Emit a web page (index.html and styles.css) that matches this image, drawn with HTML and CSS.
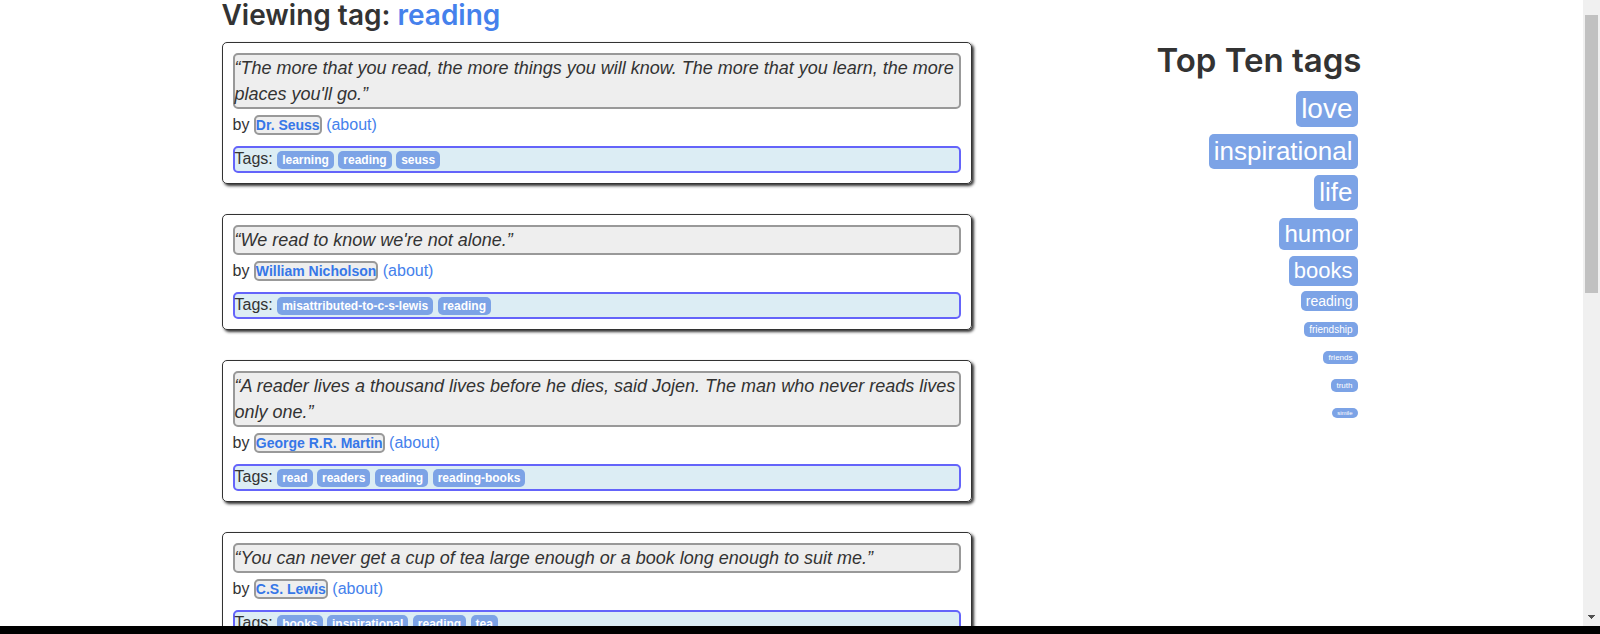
FILE: index.html
```html
<!DOCTYPE html>
<html lang="en">
<head>
<meta charset="utf-8">
<title>Quotes tagged reading</title>
<link rel="stylesheet" href="styles.css">
</head>
<body>
<div class="window">
  <div class="page">
    <div class="container">
      <main class="quotes">
        <h3 class="title">Viewing tag: <a href="#">reading</a></h3>
        <article class="quote">
          <p class="text">“The more that you read, the more things you will know. The more that you learn, the more places you'll go.”</p>
          <p class="byline">by <small class="author">Dr. Seuss</small> <a href="#">(about)</a></p>
          <div class="tags">Tags: <a class="tag" href="#">learning</a> <a class="tag" href="#">reading</a> <a class="tag" href="#">seuss</a></div>
        </article>
        <article class="quote">
          <p class="text">“We read to know we're not alone.”</p>
          <p class="byline">by <small class="author">William Nicholson</small> <a href="#">(about)</a></p>
          <div class="tags">Tags: <a class="tag" href="#">misattributed-to-c-s-lewis</a> <a class="tag" href="#">reading</a></div>
        </article>
        <article class="quote">
          <p class="text">“A reader lives a thousand lives before he dies, said Jojen. The man who never reads lives only one.”</p>
          <p class="byline">by <small class="author">George R.R. Martin</small> <a href="#">(about)</a></p>
          <div class="tags">Tags: <a class="tag" href="#">read</a> <a class="tag" href="#">readers</a> <a class="tag" href="#">reading</a> <a class="tag" href="#">reading-books</a></div>
        </article>
        <article class="quote">
          <p class="text">“You can never get a cup of tea large enough or a book long enough to suit me.”</p>
          <p class="byline">by <small class="author">C.S. Lewis</small> <a href="#">(about)</a></p>
          <div class="tags">Tags: <a class="tag" href="#">books</a> <a class="tag" href="#">inspirational</a> <a class="tag" href="#">reading</a> <a class="tag" href="#">tea</a></div>
        </article>
      </main>
      <aside class="top-tags">
        <h2 class="heading">Top Ten tags</h2>
        <ul class="cloud">
          <li class="row row-xl"><a class="top-tag size-28" href="#">love</a></li>
          <li class="row row-lg"><a class="top-tag size-26" href="#">inspirational</a></li>
          <li class="row row-lg"><a class="top-tag size-26" href="#">life</a></li>
          <li class="row row-lg"><a class="top-tag size-24" href="#">humor</a></li>
          <li class="row row-md"><a class="top-tag size-22" href="#">books</a></li>
          <li class="row"><a class="top-tag size-14" href="#">reading</a></li>
          <li class="row"><a class="top-tag size-10" href="#">friendship</a></li>
          <li class="row"><a class="top-tag size-8" href="#">friends</a></li>
          <li class="row"><a class="top-tag size-8" href="#">truth</a></li>
          <li class="row"><a class="top-tag size-6" href="#">simile</a></li>
        </ul>
      </aside>
    </div>
  </div>
  <div class="scrollbar">
    <div class="thumb"></div>
    <svg class="arrow" width="7" height="4" viewBox="0 0 7 4" aria-hidden="true"><path d="M0 0h7v1H6v1H5v1H4v1H3V3H2V2H1V1H0z" fill="#505050"/></svg>
  </div>
</div>
<div class="edge"></div>
</body>
</html>
```
FILE: styles.css
```css
* { box-sizing: border-box; }

body {
  margin: 0;
  height: 100vh;
  display: flex;
  flex-direction: column;
  overflow: hidden;
  background: #fff;
  color: #333;
  font: 16px/23px "Liberation Sans", Arial, sans-serif;
}

a { color: #4581ec; text-decoration: none; }
h2, h3, p, ul { margin: 0; padding: 0; }

.window { flex: 1; min-height: 0; display: flex; }
.page { flex: 1; overflow: hidden; }
.edge { height: 8px; background: #000; }

.container {
  max-width: 1170px;
  margin: 0 auto;
  padding: 0 15px;
  display: grid;
  grid-template-columns: 2fr 1fr;
  column-gap: 15px;
}

.quotes { min-width: 0; }

.title {
  font: 600 28px/30px Inter, sans-serif;
  margin-bottom: 12px;
}

.quote {
  margin-bottom: 30px;
  padding: 10px;
  border: 1px solid #333;
  border-radius: 5px;
  box-shadow: 2px 2px 3px #333;
}

.text {
  border: 2px solid #999;
  border-radius: 5px;
  background: #eee;
  font-size: 18px;
  line-height: 26px;
  font-style: italic;
}

.byline { margin-top: 4px; }

.author {
  border: 2px solid #999;
  border-radius: 5px;
  background: #eee;
  color: #3677e8;
  font-size: 14px;
  line-height: 16px;
  font-weight: bold;
}

.tags {
  margin-top: 10px;
  padding-bottom: 1px;
  border: 2px solid #6464fa;
  border-radius: 5px;
  background: #dcedf4;
  line-height: 22px;
}

.tag {
  padding: 2px 5px;
  border-radius: 5px;
  background: #7ca3e6;
  color: #fff;
  font-size: 12px;
  line-height: 16px;
  font-weight: bold;
}

.top-tags { padding-top: 40px; }

.heading {
  font: 600 33px/40px Inter, sans-serif;
  text-align: right;
}

.cloud { list-style: none; padding: 7px 4px 0 0; }

.row {
  height: 28px;
  display: flex;
  align-items: center;
  justify-content: flex-end;
}
.row-xl { height: 44px; }
.row-lg { height: 41px; }
.row-md { height: 33px; }

.top-tag {
  padding: 2px 5px;
  border-radius: 5px;
  background: #7ca3e6;
  color: #fff;
  line-height: normal;
}
.size-28 { font-size: 28px; }
.size-26 { font-size: 26px; }
.size-24 { font-size: 24px; }
.size-22 { font-size: 22px; }
.size-14 { font-size: 14px; }
.size-10 { font-size: 10px; }
.size-8 { font-size: 8px; }
.size-6 { font-size: 6px; }

.scrollbar {
  width: 17px;
  padding: 15px 2px 7px;
  display: flex;
  flex-direction: column;
  align-items: center;
  justify-content: space-between;
  background: #f0f0f0;
}
.thumb { width: 13px; height: 46%; background: #c1c1c1; }
```
